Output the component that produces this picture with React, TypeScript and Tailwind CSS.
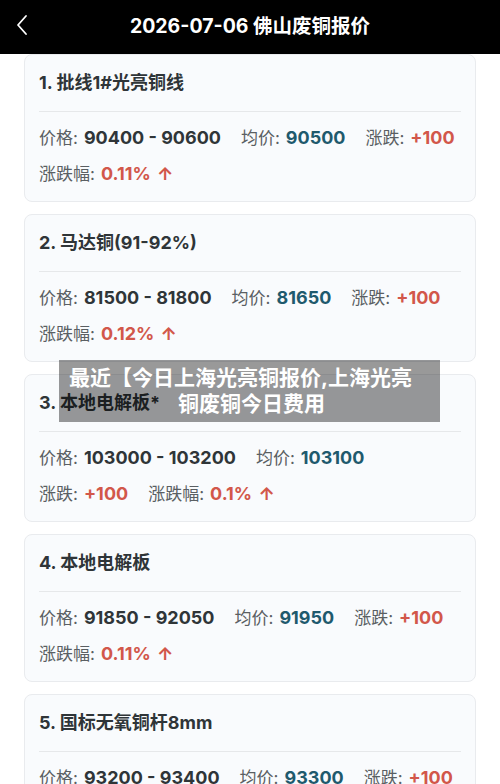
import React from 'react';

type Item = {
  title: string;
  low: string;
  high: string;
  avg: string;
  change: string;
  pct: string;
  split?: boolean;
};

const items: Item[] = [
  { title: '1. 批线1#光亮铜线', low: '90400', high: '90600', avg: '90500', change: '+100', pct: '0.11%' },
  { title: '2. 马达铜(91-92%)', low: '81500', high: '81800', avg: '81650', change: '+100', pct: '0.12%' },
  { title: '3. 本地电解板*', low: '103000', high: '103200', avg: '103100', change: '+100', pct: '0.1%', split: true },
  { title: '4. 本地电解板', low: '91850', high: '92050', avg: '91950', change: '+100', pct: '0.11%' },
  { title: '5. 国标无氧铜杆8mm', low: '93200', high: '93400', avg: '93300', change: '+100', pct: '0.11%' },
];

const font = { fontFamily: 'Inter, "Noto Sans CJK SC", sans-serif' };

function Label({ children }: { children: React.ReactNode }) {
  return <span className="text-[17px] text-[#5a5f63] mr-[6px]">{children}:</span>;
}

function Price({ it }: { it: Item }) {
  return (
    <span className="flex items-baseline">
      <Label>价格</Label>
      <span className="text-[18px] font-bold text-[#2f3538]">
        {it.low} - {it.high}
      </span>
    </span>
  );
}

function Avg({ it }: { it: Item }) {
  return (
    <span className="flex items-baseline">
      <Label>均价</Label>
      <span className="text-[18px] font-bold text-[#1f5a6d]">{it.avg}</span>
    </span>
  );
}

function Change({ it }: { it: Item }) {
  return (
    <span className="flex items-baseline">
      <Label>涨跌</Label>
      <span className="text-[18px] font-bold text-[#d2574a]">{it.change}</span>
    </span>
  );
}

function Pct({ it }: { it: Item }) {
  return (
    <span className="flex items-baseline">
      <Label>涨跌幅</Label>
      <span className="text-[18px] font-bold text-[#d2574a]">
        {it.pct} <span className="ml-[2px]">↑</span>
      </span>
    </span>
  );
}

function Card({ it }: { it: Item }) {
  return (
    <div className="mx-[24px] h-[148px] shrink-0 rounded-lg border border-[#e9ebee] bg-[#f9fbfd] px-[14px]">
      <div className="border-b border-[#e6e8ea] pt-[16px] pb-[16px] text-[18px] leading-[24px] font-bold text-[#2f3538]">
        {it.title}
      </div>
      <div className="mt-[13px] flex h-[26px] items-center gap-x-[20px]">
        <Price it={it} />
        <Avg it={it} />
        {!it.split && <Change it={it} />}
      </div>
      <div className="mt-[10px] flex h-[26px] items-center gap-x-[20px]">
        {it.split && <Change it={it} />}
        <Pct it={it} />
      </div>
    </div>
  );
}

export default function App() {
  return (
    <div className="relative h-[784px] w-[500px] overflow-hidden bg-white" style={font}>
      {/* top bar */}
      <div className="relative flex h-[54px] items-center justify-center bg-black">
        <svg className="absolute left-[15px] top-[14px]" width="14" height="22" viewBox="0 0 14 22" fill="none">
          <path d="M11 2 L3 11 L11 20" stroke="white" strokeWidth="1.8" strokeLinecap="round" strokeLinejoin="round" />
        </svg>
        <span className="text-[19.5px] font-bold text-white">2026-07-06 佛山废铜报价</span>
      </div>

      <div className="flex flex-col gap-[12px]">
        {items.map(it => (
          <Card key={it.title} it={it} />
        ))}
      </div>

      {/* caption overlay */}
      <div className="absolute left-[59px] top-[360px] h-[62px] w-[381px] bg-black/40 pt-[5px] text-[21px] leading-[26px] font-bold text-white">
        <div className="pl-[10px] whitespace-nowrap">最近【今日上海光亮铜报价,上海光亮</div>
        <div className="pl-[119px] whitespace-nowrap">铜废铜今日费用</div>
      </div>
    </div>
  );
}
